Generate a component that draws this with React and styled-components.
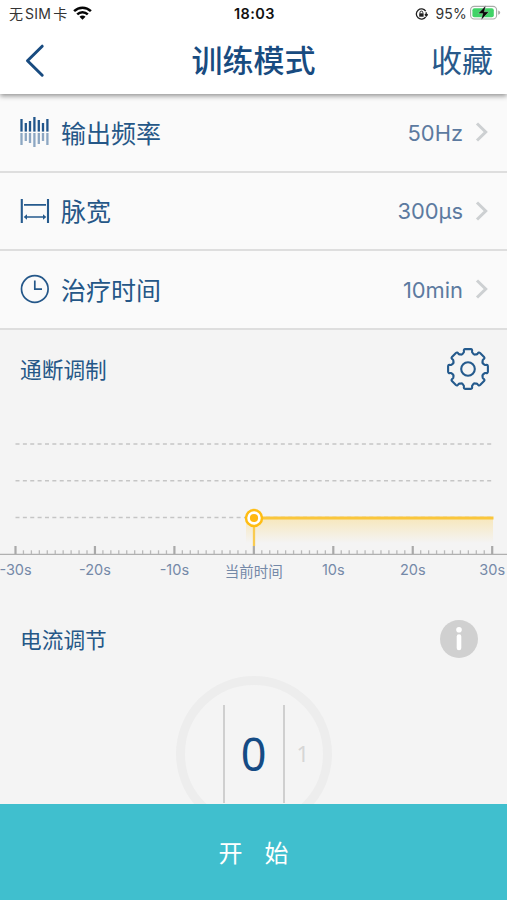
import React from 'react';
import styled, { createGlobalStyle } from 'styled-components';

const settings = [
  { id: 'freq', label: '输出频率', value: '50Hz' },
  { id: 'width', label: '脉宽', value: '300μs' },
  { id: 'time', label: '治疗时间', value: '10min' },
];

const bars = [
  [21.5, 120, 145],
  [25.8, 124, 141],
  [30, 122, 143],
  [34.4, 118, 147],
  [38.8, 121, 144],
  [43, 124, 141],
  [47.4, 120, 145],
];

const ticks = Array.from({ length: 61 }, (_, i) => i);
const axisLabels = ['-30s', '-20s', '-10s', '当前时间', '10s', '20s', '30s'];

// eight-tooth outline around 22,22
const gearPath = () => {
  const at = (radius, deg) => {
    const a = (deg * Math.PI) / 180;
    return `${(22 + radius * Math.sin(a)).toFixed(2)} ${(22 - radius * Math.cos(a)).toFixed(2)}`;
  };
  let d = '';
  for (let i = 0; i < 8; i++) {
    const t = i * 45;
    d += `${i === 0 ? 'M' : 'L'}${at(16.8, t - 16)}`;
    d += `Q${at(16.8, t - 13.5)} ${at(18, t - 13)}`;
    d += `Q${at(20.3, t - 13)} ${at(20.1, t - 8)}`;
    d += `L${at(20.1, t + 8)}`;
    d += `Q${at(20.3, t + 13)} ${at(18, t + 13)}`;
    d += `Q${at(16.8, t + 13.5)} ${at(16.8, t + 16)}`;
    d += `Q${at(14.9, t + 22.5)} ${at(16.8, t + 29)}`;
  }
  return d + 'Z';
};

const RowIcon = ({ id }) => {
  if (id === 'freq') {
    return (
      <svg width="30" height="32" viewBox="20 117 30 32" strokeWidth="2.3">
        {bars.map(([x, top, bottom]) => (
          <g key={x} stroke="#20558b">
            <path d={`M${x} ${top}V132.6`} />
            <path d={`M${x} 134V${bottom + 1}`} opacity="0.5" />
          </g>
        ))}
      </svg>
    );
  }
  if (id === 'width') {
    return (
      <svg width="30" height="26" viewBox="0 0 30 26" fill="none" stroke="#255a8d" strokeWidth="1.7">
        <path d="M1.8 1V25M28 1V25" strokeWidth="2.1" />
        <path d="M4 6.8H26M5 19H25" />
        <path d="M7 16.2L3.7 19L7 21.8ZM23 16.2L26.3 19L23 21.8Z" fill="#255a8d" stroke="none" />
      </svg>
    );
  }
  return (
    <svg width="30" height="30" viewBox="0 0 30 30" fill="none" stroke="#245789" strokeWidth="1.7">
      <circle cx="14.8" cy="15" r="13.3" />
      <path d="M14.8 6.5V15.2H22" />
    </svg>
  );
};

const StatusBar = () => (
  <Status>
    <Carrier>
      <span>无<b>SIM</b>卡</span>
      <svg width="19" height="14" viewBox="0 0 19 14" fill="none" stroke="#050505" strokeWidth="2.5">
        <path d="M1.1 5.2C5.9 .5 13.1 .5 17.9 5.2" />
        <path d="M4.2 8.4C7.2 5.5 11.8 5.5 14.8 8.4" />
        <path d="M6.5 10.8C8.2 9.2 10.8 9.2 12.5 10.8L9.5 13.8Z" fill="#050505" stroke="none" />
      </svg>
    </Carrier>
    <Clock>18:03</Clock>
    <Power>
      <svg width="13" height="12" viewBox="0 0 13 12" fill="none" stroke="#222" strokeWidth="1.3">
        <path d="M10.7 3.2A5.1 5.1 0 1 0 10.7 8.8" />
        <path d="M11.2 4.3V7.2M9.9 6.3L11.3 7.9L12.7 6.3" />
        <rect x="4.2" y="5.3" width="4.4" height="3.4" fill="#222" stroke="none" />
        <path d="M5 5.4V4.5A1.4 1.4 0 0 1 7.8 4.5V5.4" strokeWidth="1" />
      </svg>
      <span>95%</span>
      <svg width="31" height="16" viewBox="0 0 31 16">
        <rect x="0.6" y="1.4" width="26" height="12.6" rx="3.6" fill="#fff" stroke="#a9aca9" strokeWidth="1.1" />
        <rect x="2.4" y="3.2" width="21.4" height="9" rx="2" fill="#40d367" />
        <path d="M28.2 5.6Q30.2 6.2 30.2 7.7T28.2 9.8Z" fill="#a9aca9" />
        <path d="M15.8 .5L8.2 8.6H12.8L11.2 15L18.9 6.8H14.3Z" fill="#080808" stroke="#fff" strokeWidth="0.3" />
      </svg>
    </Power>
  </Status>
);

const Chart = () => (
  <ChartSvg width="507" height="160" viewBox="0 430 507 160">
    <defs>
      <linearGradient id="glow" x1="0" y1="0" x2="0" y2="1">
        <stop offset="0" stopColor="#ffc72c" stopOpacity="0.27" />
        <stop offset="1" stopColor="#ffc72c" stopOpacity="0" />
      </linearGradient>
    </defs>
    {[444, 480.7, 517.4].map((y) => (
      <path key={y} d={`M15.5 ${y}H493`} stroke="#c5c5c5" strokeWidth="1.5" strokeDasharray="4 3.37" />
    ))}
    <rect x="246" y="519" width="247" height="24" fill="url(#glow)" />
    <path d="M0 554.4H507" stroke="#b0b0b0" strokeWidth="1.4" />
    {ticks.map((i) => {
      const major = i % 10 === 0;
      const x = 15.5 + i * 7.945;
      return (
        <path
          key={i}
          d={`M${x} ${major ? 546 : 550.3}V554`}
          stroke={major ? '#a9a9a9' : '#b9b9b9'}
          strokeWidth={major ? 2.2 : 1.3}
        />
      );
    })}
    <path d="M254 526V546" stroke="#f9cb50" strokeWidth="2.3" />
    <path d="M262 518H493.5" stroke="#fac63b" strokeWidth="2.8" />
    <circle cx="254" cy="518" r="8" fill="#fff" stroke="#ffbd13" strokeWidth="2.5" />
    <circle cx="254" cy="518" r="4.1" fill="#ffb810" />
    {axisLabels.map((label, i) => (
      <AxisText key={label} x={15.5 + i * 79.45} y={i === 3 ? 577 : 574.5}>
        {label}
      </AxisText>
    ))}
  </ChartSvg>
);

const App = () => {
  return (
    <Screen>
      <GlobalStyle />
      <Header>
        <StatusBar />
        <NavBar>
          <BackButton type="button">
            <svg width="20" height="34" viewBox="0 0 20 34" fill="none" stroke="#184b80" strokeWidth="3" strokeLinecap="round">
              <path d="M17.2 2.2L2.5 16.8L17.2 31.2" strokeLinejoin="round" />
            </svg>
          </BackButton>
          <Title>训练模式</Title>
          <SaveButton type="button">收藏</SaveButton>
        </NavBar>
      </Header>

      {settings.map(({ id, label, value }) => (
        <Row key={id}>
          <RowIcon id={id} />
          <RowLabel>{label}</RowLabel>
          <RowValue>{value}</RowValue>
          <svg width="14" height="22" viewBox="0 0 14 22" fill="none" stroke="#cdd0d2" strokeWidth="3">
            <path d="M2 2.5L10.7 11L2 19.5" />
          </svg>
        </Row>
      ))}

      <SectionHead $height={101.5} $right={17} $bottom={22}>
        <SectionTitle>通断调制</SectionTitle>
        <svg width="44" height="44" viewBox="0 0 44 44" fill="none" stroke="#245a8d" strokeWidth="2.1" strokeLinejoin="round">
          <path d={gearPath()} />
          <circle cx="22" cy="22" r="6.8" />
        </svg>
      </SectionHead>
      <Chart />

      <SectionHead $height={86} $right={29} $top={12}>
        <SectionTitle>电流调节</SectionTitle>
        <svg width="38" height="38" viewBox="0 0 38 38">
          <circle cx="19" cy="19" r="19" fill="#d0d0d0" />
          <circle cx="19" cy="9.7" r="2.8" fill="#fff" />
          <path d="M19 16.5V28" stroke="#fff" strokeWidth="4.6" strokeLinecap="round" />
        </svg>
      </SectionHead>
      <DialArea>
        <Dial>
          <Current>0</Current>
          <Next>1</Next>
        </Dial>
      </DialArea>

      <StartButton type="button">开<span>始</span></StartButton>
    </Screen>
  );
};

const GlobalStyle = createGlobalStyle`
*{
  box-sizing: border-box;
}
body{
  margin: 0;
  background: #f4f4f4;
}
button{
  padding: 0;
  border: 0;
  background: transparent;
  font-family: inherit;
  cursor: pointer;
}
svg{
  display: block;
  flex-shrink: 0;
}
`

const Screen = styled.main`
display: flex;
flex-direction: column;
width: 507px;
height: 900px;
overflow: hidden;
background: #f4f4f4;
color: #255787;
font-family: Inter, 'Noto Sans CJK SC', sans-serif;
`

const Header = styled.header`
position: relative;
flex: none;
height: 94px;
background: #fff;
box-shadow: 0 2px 5px rgba(0, 0, 0, 0.42);
`

const Status = styled.div`
display: grid;
grid-template-columns: 1fr auto 1fr;
align-items: center;
height: 27px;
padding: 0 6px 0 9px;
color: #333;
font-size: 14px;
line-height: 27px;
`

const Carrier = styled.div`
display: flex;
align-items: center;
gap: 6px;
b{
  margin: 0 2px;
  font-weight: 400;
  letter-spacing: 0.3px;
}
svg{
  margin-top: -2px;
}
`

const Clock = styled.div`
margin-right: 1px;
color: #111;
font-size: 14.5px;
font-weight: 600;
letter-spacing: 0.4px;
`

const Power = styled.div`
display: flex;
align-items: center;
justify-content: flex-end;
span{
  margin: 0 3px 0 7px;
  letter-spacing: 0.2px;
}
svg:last-child{
  margin-top: -1px;
}
`

const NavBar = styled.nav`
display: grid;
grid-template-columns: 1fr auto 1fr;
align-items: center;
height: 67px;
padding: 1px 14px 0 25px;
color: #184b80;
`

const BackButton = styled.button`
justify-self: start;
`

const Title = styled.h1`
margin: 0 11px 0 0;
font-size: 31px;
font-weight: 500;
line-height: 40px;
`

const SaveButton = styled.button`
justify-self: end;
color: #28598a;
font-size: 31px;
line-height: 40px;
`

const Row = styled.div`
display: flex;
align-items: center;
flex: none;
height: 78.5px;
padding: 0 18px 0 19.5px;
background: #fafafa;
border-bottom: 2px solid #dedede;
`

const RowLabel = styled.span`
margin-left: 11.5px;
padding-top: 3px;
font-size: 25px;
line-height: 36px;
`

const RowValue = styled.span`
margin-left: auto;
margin-right: 12px;
padding-top: 1px;
color: #5c7aa0;
font-size: 21.9px;
`

const SectionHead = styled.div`
display: flex;
align-items: center;
justify-content: space-between;
flex: none;
height: ${({ $height }) => $height}px;
padding: ${({ $top = 0 }) => $top}px ${({ $right }) => $right}px ${({ $bottom = 0 }) => $bottom}px 20px;
`

const SectionTitle = styled.h2`
margin: 0;
padding-top: 1px;
font-size: 21.7px;
font-weight: 400;
line-height: 32px;
`

const ChartSvg = styled.svg`
margin-top: -1px;
`

const AxisText = styled.text`
fill: #7489a8;
font-size: 14.5px;
text-anchor: middle;
`

const DialArea = styled.div`
display: flex;
justify-content: center;
flex: 1;
min-height: 0;
overflow: hidden;
`

const Dial = styled.div`
display: grid;
grid-template-columns: 1fr 62px 1fr;
flex: none;
width: 156px;
height: 156px;
padding-top: 20px;
border: 9px solid #ededed;
border-radius: 50%;
line-height: 97px;
`

const Current = styled.div`
grid-column: 2;
height: 98px;
border: solid #cfcfcf;
border-width: 0 2px;
color: #154b84;
font-family: 'Noto Sans', sans-serif;
font-size: 45px;
line-height: 97px;
text-align: center;
`

const Next = styled.div`
padding-left: 12px;
color: #d6d6d6;
font-family: 'Noto Sans', sans-serif;
font-size: 22px;
`

const StartButton = styled.button`
display: flex;
align-items: center;
justify-content: center;
flex: none;
gap: 22px;
height: 96px;
padding-top: 3px;
background: #40bfce;
color: #fff;
font-size: 24px;
line-height: 36px;
`

export default App;
